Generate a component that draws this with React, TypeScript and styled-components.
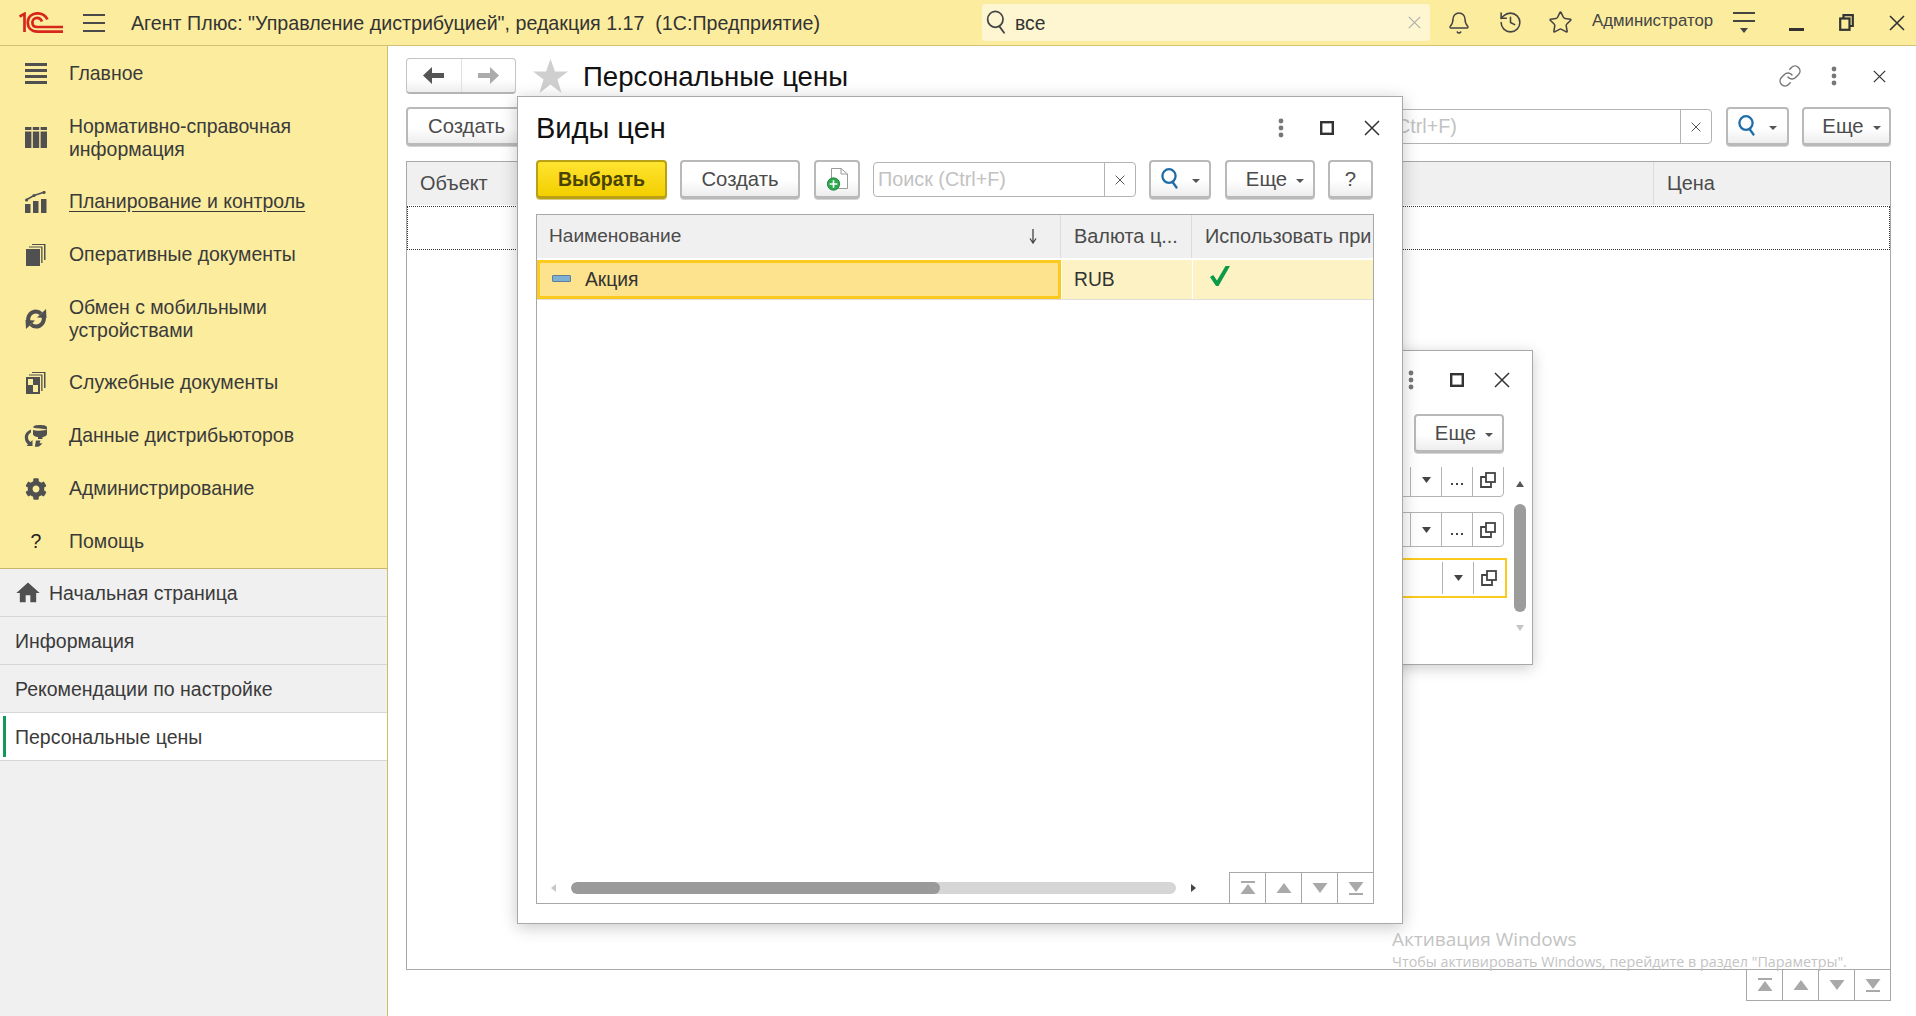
import React from 'react';
import styled, { createGlobalStyle } from 'styled-components';
import { FaCog } from 'react-icons/fa';
import { MdHome } from 'react-icons/md';
import { Bell, History, Star, Link } from 'lucide-react';

const GlobalStyle = createGlobalStyle`
  html, body { margin: 0; padding: 0; height: 100%; overflow: hidden; }
  body { font-family: "Liberation Sans", Arial, sans-serif; font-size: 19.3px; color: #333; background: #fff; }
  * { box-sizing: border-box; }
`;

const Root = styled.div`
  position: relative;
  width: 1916px;
  height: 1016px;
  display: flex;
  flex-direction: column;
  overflow: hidden;
`;

/* top bar */
const TopBar = styled.header`
  height: 46px;
  flex: none;
  display: flex;
  align-items: center;
  background: #fbec9e;
  border-bottom: 1px solid #d4c274;
`;
const Logo = styled.svg`
  width: 44px;
  height: 21px;
  margin-left: 19px;
  flex: none;
`;
const Burger = styled.div`
  width: 22px;
  height: 18px;
  margin-left: 20px;
  flex: none;
  border-top: 2px solid #4a4a4a;
  border-bottom: 2px solid #4a4a4a;
  position: relative;
  &::after {
    content: '';
    position: absolute;
    left: 0;
    right: 0;
    top: 6px;
    height: 2px;
    background: #4a4a4a;
  }
`;
const AppTitle = styled.div`
  margin: 2px 0 0 26px;
  width: 851px;
  flex: none;
  font-size: 19.65px;
  color: #333;
  white-space: pre;
`;
const GlobalSearch = styled.div`
  width: 448px;
  height: 37px;
  flex: none;
  display: flex;
  align-items: center;
  background: #fdf6d0;
  border-radius: 3px;
  padding: 0 9px 0 4px;
  color: #333;
`;
const GlobalSearchText = styled.span`
  flex: 1;
  margin: 2px 0 0 8px;
`;
const TopIcons = styled.div`
  display: flex;
  align-items: center;
  color: #444;
`;
const TopIcon = styled.div<{ $w: number }>`
  width: ${(p) => p.$w}px;
  display: flex;
  justify-content: center;
  align-items: center;
  flex: none;
`;
const UserName = styled.div`
  font-size: 16.8px;
  color: #444;
  margin: -3px 0 0 4px;
  width: 130px;
  flex: none;
`;

/* layout */
const Body = styled.div`
  flex: 1;
  display: flex;
  min-height: 0;
`;
const Sidebar = styled.aside`
  width: 388px;
  flex: none;
  display: flex;
  flex-direction: column;
  background: #f0f0f0;
  border-right: 1px solid #cdbd6e;
`;
const Menu = styled.nav`
  padding-top: 1px;
  background: #fbec9e;
  border-bottom: 1px solid #c8b86a;
`;
const MenuItem = styled.div<{ $active?: boolean; $h?: number }>`
  height: ${(p) => p.$h ?? 53}px;
  display: flex;
  align-items: center;
  font-size: 19.45px;
  line-height: 23px;
  color: #3a3a3a;
  span {
    text-decoration: ${(p) => (p.$active ? 'underline' : 'none')};
    text-underline-offset: 3px;
  }
`;
const MenuIcon = styled.div`
  width: 69px;
  flex: none;
  display: flex;
  justify-content: center;
  padding-left: 3px;
  color: #505050;
`;
const OpenTab = styled.div<{ $current?: boolean }>`
  position: relative;
  height: 48px;
  display: flex;
  align-items: center;
  padding: 1px 0 0 15px;
  border-bottom: 1px solid #d6d6d6;
  background: ${(p) => (p.$current ? '#fff' : 'transparent')};
  font-size: 19.5px;
  color: #3a3a3a;
  &::before {
    content: '';
    display: ${(p) => (p.$current ? 'block' : 'none')};
    position: absolute;
    left: 3px;
    top: 3px;
    bottom: 3px;
    width: 3px;
    background: #109a56;
  }
  svg { margin: 0 9px 0 0; color: #505050; }
`;
const Main = styled.main`
  flex: 1;
  min-width: 0;
  display: flex;
  flex-direction: column;
  padding: 12px 25px 15px 18px;
`;
const PageHead = styled.div`
  display: flex;
  align-items: center;
  height: 36px;
`;
const ArrowGroup = styled.div`
  display: flex;
  width: 110px;
  height: 36px;
  border: 1px solid #c4c4c4;
  border-bottom: 2px solid #b4b4b4;
  border-radius: 4px;
  background: linear-gradient(#fff 60%, #eee);
`;
const ArrowCell = styled.div`
  flex: 1;
  display: flex;
  align-items: center;
  justify-content: center;
  & + & { border-left: 1px solid #e0e0e0; }
`;
const PageStar = styled.svg`
  margin-left: 17px;
  flex: none;
`;
const PageTitle = styled.h1`
  flex: 1;
  margin: 2px 0 0 15px;
  font-size: 27.6px;
  font-weight: 400;
  color: #111;
`;
const WinButtons = styled.div<{ $shift: number }>`
  display: flex;
  margin-right: ${(p) => p.$shift}px;
`;
const WinBtn = styled.div`
  width: 45.5px;
  height: 28px;
  display: flex;
  align-items: center;
  justify-content: center;
  color: #444;
`;
const LinkBtn = styled(WinBtn)`
  padding-left: 4px;
`;
const Toolbar = styled.div<{ $mt?: number }>`
  display: flex;
  align-items: center;
  height: 39px;
  flex: none;
  margin-top: ${(p) => p.$mt ?? 0}px;
`;
const Btn = styled.button<{ $primary?: boolean; $ml?: number; $w?: number; $pl?: number }>`
  height: 39px;
  flex: none;
  display: inline-flex;
  align-items: center;
  justify-content: center;
  margin-left: ${(p) => p.$ml ?? 0}px;
  width: ${(p) => (p.$w ? `${p.$w}px` : 'auto')};
  padding: ${(p) => (p.$w ? `0 0 0 ${p.$pl ?? 0}px` : '0 20px')};
  font-family: inherit;
  font-size: ${(p) => (p.$primary ? '19.5px' : '20.3px')};
  font-weight: ${(p) => (p.$primary ? 700 : 400)};
  color: ${(p) => (p.$primary ? '#4a4200' : '#4b4b4b')};
  background: ${(p) =>
    p.$primary ? 'linear-gradient(#ffe430, #f3cf00)' : 'linear-gradient(#fff 55%, #ededed)'};
  border: 2px solid ${(p) => (p.$primary ? '#b9a015' : '#b9b9b9')};
  border-bottom-width: 3px;
  border-radius: 4px;
  box-shadow: 0 1px 0 ${(p) => (p.$primary ? '#d8c98a' : '#d4d4d4')};
`;
const Caret = styled.i<{ $gap?: number }>`
  display: inline-block;
  width: 0;
  height: 0;
  margin-left: ${(p) => p.$gap ?? 9}px;
  margin-top: 3px;
  border-left: 4px solid transparent;
  border-right: 4px solid transparent;
  border-top: 4px solid #555;
`;
const Search = styled.div<{ $w: number; $ml?: string }>`
  width: ${(p) => p.$w}px;
  height: 35px;
  flex: none;
  margin-left: ${(p) => p.$ml ?? '0'};
  display: flex;
  align-items: center;
  border: 1px solid #b4b4b4;
  border-radius: 4px;
  background: #fff;
`;
const SearchText = styled.div`
  flex: 1;
  padding-left: 4px;
  font-size: 19.8px;
  color: #c2c2c2;
  white-space: nowrap;
`;
const SearchClear = styled.div`
  width: 31px;
  height: 100%;
  flex: none;
  border-left: 1px solid #b4b4b4;
  display: flex;
  align-items: center;
  justify-content: center;
  color: #555;
`;
const Table = styled.div<{ $mt: number }>`
  flex: 1;
  min-height: 0;
  margin-top: ${(p) => p.$mt}px;
  display: flex;
  flex-direction: column;
  border: 1px solid #a8a8a8;
  background: #fff;
`;
const HeadRow = styled.div<{ $cols: string }>`
  display: grid;
  grid-template-columns: ${(p) => p.$cols};
  height: 43px;
  flex: none;
  background: #f0f0f0;
  color: #4b4b4b;
`;
const HeadCell = styled.div<{ $tight?: boolean }>`
  display: flex;
  align-items: center;
  justify-content: space-between;
  padding: 0 ${(p) => (p.$tight ? 22 : 2)}px 1px ${(p) => (p.$tight ? 12 : 13)}px;
  font-size: ${(p) => (p.$tight ? 19.1 : 19.9)}px;
  overflow: hidden;
  white-space: nowrap;
  border-right: 1px solid #dcdcdc;
  &:last-child { border-right: 0; }
`;
const EmptyRow = styled.div`
  height: 44px;
  flex: none;
  margin-top: 1px;
  border: 1px dotted #333;
`;
const BottomNav = styled.div`
  display: flex;
  justify-content: flex-end;
  height: 31px;
  flex: none;
`;
const NavGroup = styled.div<{ $boxed?: boolean }>`
  display: flex;
  height: 31px;
  margin-left: auto;
  border-top: ${(p) => (p.$boxed ? '0' : '1px solid #a8a8a8')};
  border-right: ${(p) => (p.$boxed ? '1px solid #a8a8a8' : '0')};
  border-bottom: ${(p) => (p.$boxed ? '1px solid #a8a8a8' : '0')};
`;
const NavBtn = styled.div`
  width: 36px;
  display: flex;
  align-items: center;
  justify-content: center;
  border-left: 1px solid #a8a8a8;
`;

/* windows */
const Dialog = styled.section`
  position: absolute;
  left: 517px;
  top: 96px;
  width: 886px;
  height: 828px;
  display: flex;
  flex-direction: column;
  padding: 0 28px 19px 18px;
  background: #fff;
  border: 1px solid #a8a8a8;
  box-shadow: 0 3px 16px rgba(0, 0, 0, 0.22);
  z-index: 3;
`;
const BackWindow = styled.section`
  position: absolute;
  left: 1100px;
  top: 350px;
  width: 433px;
  height: 315px;
  display: flex;
  flex-direction: column;
  padding-right: 28px;
  background: #fff;
  border: 1px solid #a8a8a8;
  box-shadow: 0 3px 14px rgba(0, 0, 0, 0.2);
  z-index: 2;
`;
const DialogHead = styled.div`
  height: 63px;
  flex: none;
  display: flex;
  align-items: center;
  justify-content: space-between;
  padding-bottom: 2px;
  margin-right: -21px;
`;
const DialogTitle = styled.h2`
  margin: 2px 0 0;
  font-size: 29px;
  font-weight: 400;
  color: #111;
`;
const BackHead = styled.div`
  height: 63px;
  flex: none;
  display: flex;
  align-items: center;
  justify-content: flex-end;
  padding-bottom: 6px;
  margin-right: -21px;
`;
const BackTools = styled.div`
  height: 39px;
  flex: none;
  display: flex;
  justify-content: flex-end;
`;
const FormArea = styled.div`
  position: relative;
  margin: 14px -4px 0 0;
  padding-right: 4px;
  height: 172px;
  overflow: hidden;
`;
const FieldRow = styled.div<{ $focus?: boolean }>`
  display: flex;
  justify-content: flex-end;
  height: ${(p) => (p.$focus ? '40px' : '35px')};
  margin: ${(p) => (p.$focus ? '11px -3px 0 0' : '15px 0 0')};
  padding: ${(p) => (p.$focus ? '2px 1px' : '0')};
  border: ${(p) => (p.$focus ? '2px solid #fbca1c' : '1px solid #b4b4b4')};
  border-radius: ${(p) => (p.$focus ? '0' : '4px')};
  &:first-child { margin-top: -5px; }
`;
const FieldCell = styled.div`
  width: 31px;
  flex: none;
  display: flex;
  align-items: center;
  justify-content: center;
  border-left: 1px solid #b4b4b4;
  color: #444;
`;
const FieldDots = styled.div`
  padding-top: 9px;
  display: flex;
  gap: 2.5px;
  i {
    width: 2.5px;
    height: 2.5px;
    background: #444;
  }
`;
const ScrollV = styled.div`
  position: absolute;
  right: 6px;
  top: 128px;
  width: 12px;
  height: 160px;
`;
const ScrollThumb = styled.div`
  position: absolute;
  left: 0;
  right: 0;
  top: 25px;
  height: 108px;
  border-radius: 6px;
  background: #9c9c9c;
`;
const Tri = styled.i<{ $up?: boolean; $c: string; $top: number }>`
  position: absolute;
  left: 2px;
  top: ${(p) => p.$top}px;
  width: 0;
  height: 0;
  border-left: 4px solid transparent;
  border-right: 4px solid transparent;
  ${(p) => (p.$up ? `border-bottom: 6px solid ${p.$c};` : `border-top: 6px solid ${p.$c};`)}
`;
const TableBody = styled.div`
  flex: 1;
  min-height: 0;
`;
const SelRow = styled.div`
  display: grid;
  grid-template-columns: 524px 131px 1fr;
  height: 39px;
  margin-top: 2px;
  background: #fdf2c4;
  box-shadow: 0 1px 0 #dedede;
`;
const SelMain = styled.div`
  display: flex;
  align-items: center;
  padding-left: 12px;
  background: #fde38d;
  border: 3px solid #fbca1c;
  color: #333;
`;
const Dash = styled.i`
  width: 19px;
  height: 7px;
  flex: none;
  margin-right: 14px;
  margin-top: -2px;
  background: #7fb0d4;
  border: 1px solid #5d7f99;
  border-radius: 1px;
`;
const Cell = styled.div`
  display: flex;
  align-items: center;
  padding-left: 12px;
  border-left: 1px solid #fff;
  color: #333;
`;
const TableFoot = styled.div`
  height: 31px;
  flex: none;
  display: flex;
  align-items: center;
`;
const HTrack = styled.div`
  width: 605px;
  height: 12px;
  margin: 0 15px;
  border-radius: 6px;
  background: #d6d6d6;
  overflow: hidden;
`;
const HThumb = styled.div`
  height: 100%;
  width: 61%;
  border-radius: 6px;
  background: #9a9a9a;
`;
const SideTri = styled.i<{ $dir: 'l' | 'r' }>`
  width: 0;
  height: 0;
  flex: none;
  border-top: 4px solid transparent;
  border-bottom: 4px solid transparent;
  ${(p) =>
    p.$dir === 'l'
      ? 'margin-left: 14px; border-right: 5px solid #c8c8c8;'
      : 'border-left: 5px solid #444;'}
`;
const Watermark = styled.div`
  position: absolute;
  left: 1392px;
  top: 925px;
  z-index: 4;
  font-family: "Open Sans", "Noto Sans", sans-serif;
  color: #c3c3c3;
  pointer-events: none;
  white-space: nowrap;
`;
const WatermarkTitle = styled.div`
  font-size: 19px;
  line-height: 28px;
`;
const WatermarkText = styled.div`
  font-size: 14.3px;
  line-height: 20px;
  margin-top: -1px;
`;

/* drawings */
const Dots = () => (
  <svg width="6" height="20" viewBox="0 0 6 20" fill="#777">
    <circle cx="3" cy="3" r="2.4" />
    <circle cx="3" cy="10" r="2.4" />
    <circle cx="3" cy="17" r="2.4" />
  </svg>
);
const Square = () => (
  <svg width="14" height="14" viewBox="0 0 14 14" fill="none" stroke="#333" strokeWidth="2.4">
    <rect x="1.2" y="1.2" width="11.6" height="11.6" />
  </svg>
);
const Cross = ({ size = 16, w = 1.5, c = '#333' }: { size?: number; w?: number; c?: string }) => (
  <svg width={size} height={size} viewBox="0 0 16 16" stroke={c} strokeWidth={w} fill="none">
    <path d="M1 1L15 15M15 1L1 15" />
  </svg>
);
const Loupe = ({ c = '#1f6da8', w = 2.3, size = 18 }: { c?: string; w?: number; size?: number }) => (
  <svg width={size} height={size * 1.17} viewBox="0 0 18 21" fill="none" stroke={c} strokeWidth={w}>
    <ellipse cx="8" cy="8" rx="6.6" ry="6.8" />
    <path d="M11.5 14L15.5 19.5" strokeLinecap="round" />
  </svg>
);
const Nav = ({ kind, c = '#a9a9a9' }: { kind: 'first' | 'up' | 'down' | 'last'; c?: string }) => (
  <svg width="18" height="16" viewBox="0 0 18 16" fill={c}>
    {kind === 'first' && <path d="M2 1H16V3H2ZM9 4L16.5 14H1.5Z" />}
    {kind === 'up' && <path d="M9 3L16.5 13H1.5Z" />}
    {kind === 'down' && <path d="M1.5 3H16.5L9 13Z" />}
    {kind === 'last' && <path d="M1.5 2H16.5L9 12ZM2 13H16V15H2Z" />}
  </svg>
);
const NavButtons = ({ boxed }: { boxed?: boolean }) => (
  <NavGroup $boxed={boxed}>
    <NavBtn><Nav kind="first" /></NavBtn>
    <NavBtn><Nav kind="up" /></NavBtn>
    <NavBtn><Nav kind="down" /></NavBtn>
    <NavBtn><Nav kind="last" /></NavBtn>
  </NavGroup>
);
const FieldOpen = () => (
  <svg width="16" height="16" viewBox="0 0 16 16" fill="none" stroke="#444" strokeWidth="1.8">
    <rect x="6" y="1" width="9" height="9" />
    <path d="M6 5H1V15H11V10" />
  </svg>
);
const FieldCaret = () => (
  <svg width="9" height="6" viewBox="0 0 9 6" fill="#444">
    <path d="M0 0H9L4.5 6Z" />
  </svg>
);
const BackArrow = ({ flip, c }: { flip?: boolean; c: string }) => (
  <svg width="21" height="17" viewBox="0 0 21 17" fill={c} style={flip ? { transform: 'scaleX(-1)' } : undefined}>
    <path d="M9 0L0 8.5L9 17V11H21V6H9Z" />
  </svg>
);
const DocAdd = () => (
  <svg width="21" height="23" viewBox="0 0 21 23">
    <path d="M4.5 .5H14L20.5 6V20.5H4.5Z" fill="#fff" stroke="#9a9a9a" />
    <path d="M14 .5V6H20.5" fill="none" stroke="#9a9a9a" />
    <circle cx="6.5" cy="16" r="6.2" fill="#2fa84f" stroke="#157a35" strokeWidth=".8" />
    <path d="M6.5 12.2V19.8M2.7 16H10.3" stroke="#fff" strokeWidth="1.6" />
  </svg>
);

const IconMain = () => (
  <svg width="22" height="21" viewBox="0 0 22 21" fill="currentColor">
    <rect y="0" width="22" height="3" />
    <rect y="6" width="22" height="3" />
    <rect y="12" width="22" height="3" />
    <rect y="18" width="22" height="3" />
  </svg>
);
const IconBook = () => (
  <svg width="22" height="21" viewBox="0 0 22 21" fill="currentColor">
    <rect x="0" y="0" width="6.4" height="3" />
    <rect x="7.8" y="0" width="6.4" height="3" />
    <rect x="15.6" y="0" width="6.4" height="3" />
    <rect x="0" y="4.5" width="6.4" height="16.5" />
    <rect x="7.8" y="4.5" width="6.4" height="16.5" />
    <rect x="15.6" y="4.5" width="6.4" height="16.5" />
  </svg>
);
const IconPlan = () => (
  <svg width="22" height="22" viewBox="0 0 22 22" fill="currentColor">
    <rect x="0" y="13" width="5.5" height="9" />
    <rect x="8" y="10" width="5.5" height="12" />
    <rect x="16" y="8" width="5.5" height="14" />
    <path d="M1 9L9 4.5L18 1.5" fill="none" stroke="currentColor" strokeWidth="1.6" />
    <circle cx="1.6" cy="9" r="1.6" />
    <circle cx="9" cy="4.5" r="1.6" />
    <circle cx="19" cy="1.5" r="1.6" />
  </svg>
);
const IconDocs = () => (
  <svg width="20" height="22" viewBox="0 0 20 22" fill="currentColor">
    <rect x="0" y="5" width="14" height="17" />
    <path d="M3 3.5V2.5H16.5V19H15.2V3.5Z" />
    <path d="M6 1V0H19.5V16H18V1Z" />
  </svg>
);
const IconSync = () => (
  <svg width="22" height="22" viewBox="0 0 22 22" fill="none" stroke="currentColor" strokeWidth="4">
    <path d="M3.2 13.5C2.4 7.8 6.2 3.4 11 3.4C13 3.4 14.6 4.2 16 5.6" />
    <path d="M18.8 8.5C19.6 14.2 15.8 18.6 11 18.6C9 18.6 7.4 17.8 6 16.4" />
    <path d="M12 9.5L21.5 10L21 1Z" fill="currentColor" stroke="none" />
    <path d="M10 12.5L.5 12L1 21Z" fill="currentColor" stroke="none" />
  </svg>
);
const IconService = () => (
  <svg width="20" height="22" viewBox="0 0 20 22" fill="currentColor">
    <path fillRule="evenodd" d="M0 5H14V22H0ZM2 7V13H7V7ZM7 13V20H12V13Z" />
    <path d="M3 3.5V2.5H16.5V19H15.2V3.5Z" />
    <path d="M6 1V0H19.5V16H18V1Z" />
  </svg>
);
const IconData = () => (
  <svg width="24" height="22" viewBox="0 0 24 22" fill="currentColor">
    <path d="M9 2.5C9 .8 12 0 16 0S23 .8 23 2.5V9C23 11 20 12 18.5 12V14H14V12C12 12 9 11 9 9V5C11 6 21 6 23 4.6C20 3.6 12 3.6 9 2.5Z" />
    <path d="M7 4.5C3 6 .8 9 .8 12.5 .8 15.5 2 17.8 4 19.5L2.5 21H8.5V15L6.5 17C5 15.8 4 14.2 4 12.5 4 10 5.5 8.2 7 7.5Z" />
    <path d="M12 15.5L10.8 21.8H14C15.8 21 17.4 19.8 18.4 18.2H15.5L16.5 15.5Z" />
  </svg>
);

const menu: { icon: React.ReactNode; text: React.ReactNode; active?: boolean; h?: number }[] = [
  { icon: <IconMain />, text: 'Главное' },
  { icon: <IconBook />, text: <>Нормативно-справочная<br />информация</>, h: 75 },
  { icon: <IconPlan />, text: 'Планирование и контроль', active: true },
  { icon: <IconDocs />, text: 'Оперативные документы' },
  { icon: <IconSync />, text: <>Обмен с мобильными<br />устройствами</>, h: 75 },
  { icon: <IconService />, text: 'Служебные документы' },
  { icon: <IconData />, text: 'Данные дистрибьюторов' },
  { icon: <FaCog size={22} />, text: 'Администрирование' },
  { icon: <span style={{ color: '#222' }}>?</span>, text: 'Помощь' },
];

export default function App() {
  return (
    <Root>
      <GlobalStyle />
      <TopBar>
        <Logo viewBox="0 0 44 21" fill="none" stroke="#d8261c" strokeWidth="2.7">
          <path d="M.5 4.5L5.5 1.8V20" />
          <path d="M28.5 7.5C26.5 3.5 22.5 1.3 18.5 1.3C12.5 1.3 8.8 5.2 8.8 10.4C8.8 16 12.6 19.6 18.5 19.6H44" />
          <path d="M23 9.5C22 7 20.5 5.8 18.3 5.8C15.3 5.8 13.4 7.8 13.4 10.4C13.4 13.2 15.2 15 18.3 15H44" />
        </Logo>
        <Burger />
        <AppTitle>Агент Плюс: "Управление дистрибуцией", редакция 1.17  (1С:Предприятие)</AppTitle>
        <GlobalSearch>
          <Loupe c="#444" w={1.5} size={21} />
          <GlobalSearchText>все</GlobalSearchText>
          <Cross size={13} w={1.3} c="#aaa" />
        </GlobalSearch>
        <TopIcons>
          <TopIcon $w={58}><Bell size={24} strokeWidth={1.5} /></TopIcon>
          <TopIcon $w={44}><History size={25} strokeWidth={1.5} /></TopIcon>
          <TopIcon $w={56}><Star size={25} strokeWidth={1.5} /></TopIcon>
          <UserName>Администратор</UserName>
          <TopIcon $w={44}>
            <svg width="22" height="24" viewBox="0 0 22 24" fill="#444">
              <rect y="1" width="22" height="2" />
              <rect x="0" y="9" width="22" height="2" />
              <path d="M7 17H15L11 22Z" />
            </svg>
          </TopIcon>
          <TopIcon $w={61}>
            <svg width="15" height="18" viewBox="0 0 15 18" fill="#333"><rect y="14" width="15" height="3" /></svg>
          </TopIcon>
          <TopIcon $w={39}>
            <svg width="15" height="17" viewBox="0 0 15 17" fill="none" stroke="#333" strokeWidth="2.2">
              <path d="M4.5 4V1.2H13.8V12H10.5" />
              <rect x="1.2" y="4.5" width="9.3" height="11.3" />
            </svg>
          </TopIcon>
          <TopIcon $w={62}><Cross size={16} w={1.6} /></TopIcon>
        </TopIcons>
      </TopBar>
      <Body>
        <Sidebar>
          <Menu>
            {menu.map((m, i) => (
              <MenuItem key={i} $active={m.active} $h={m.h}>
                <MenuIcon>{m.icon}</MenuIcon>
                <span>{m.text}</span>
              </MenuItem>
            ))}
          </Menu>
          <OpenTab><MdHome size={28} style={{ marginLeft: -1, marginRight: 7 }} />Начальная страница</OpenTab>
          <OpenTab>Информация</OpenTab>
          <OpenTab>Рекомендации по настройке</OpenTab>
          <OpenTab $current>Персональные цены</OpenTab>
        </Sidebar>
        <Main>
          <PageHead>
            <ArrowGroup>
              <ArrowCell><BackArrow c="#555" /></ArrowCell>
              <ArrowCell><BackArrow flip c="#ababab" /></ArrowCell>
            </ArrowGroup>
            <PageStar width="35" height="34" viewBox="0 0 35 34" fill="#cfcfcf">
              <path d="M17.5 0L22 12.5H35L24.5 20.5L28.5 34L17.5 25.5L6.5 34L10.5 20.5L0 12.5H13Z" />
            </PageStar>
            <PageTitle>Персональные цены</PageTitle>
            <WinButtons $shift={-11}>
              <LinkBtn><Link size={24} strokeWidth={1.5} color="#777" /></LinkBtn>
              <WinBtn><Dots /></WinBtn>
              <WinBtn><Cross size={13} w={1.5} /></WinBtn>
            </WinButtons>
          </PageHead>
          <Toolbar $mt={13}>
            <Btn>Создать</Btn>
            <Search $w={388} $ml="auto">
              <SearchText>Поиск (Ctrl+F)</SearchText>
              <SearchClear><Cross size={10} w={1.6} c="#555" /></SearchClear>
            </Search>
            <Btn $w={63} $ml={14}><Loupe /><Caret $gap={13} /></Btn>
            <Btn $w={89} $ml={13} $pl={10}>Еще<Caret /></Btn>
          </Toolbar>
          <Table $mt={15}>
            <HeadRow $cols="1247px 1fr">
              <HeadCell>Объект</HeadCell>
              <HeadCell>Цена</HeadCell>
            </HeadRow>
            <EmptyRow />
          </Table>
          <BottomNav><NavButtons boxed /></BottomNav>
        </Main>
      </Body>

      <BackWindow>
        <BackHead>
          <WinBtn><Dots /></WinBtn>
          <WinBtn><Square /></WinBtn>
          <WinBtn><Cross size={16} w={1.5} /></WinBtn>
        </BackHead>
        <BackTools>
          <Btn $w={90} $pl={10}>Еще<Caret /></Btn>
        </BackTools>
        <FormArea>
          <FieldRow>
            <FieldCell><FieldCaret /></FieldCell>
            <FieldCell><FieldDots><i /><i /><i /></FieldDots></FieldCell>
            <FieldCell><FieldOpen /></FieldCell>
          </FieldRow>
          <FieldRow>
            <FieldCell><FieldCaret /></FieldCell>
            <FieldCell><FieldDots><i /><i /><i /></FieldDots></FieldCell>
            <FieldCell><FieldOpen /></FieldCell>
          </FieldRow>
          <FieldRow $focus>
            <FieldCell><FieldCaret /></FieldCell>
            <FieldCell><FieldOpen /></FieldCell>
          </FieldRow>
        </FormArea>
        <ScrollV>
          <Tri $up $c="#555" $top={2} />
          <ScrollThumb />
          <Tri $c="#c4c4c4" $top={146} />
        </ScrollV>
      </BackWindow>

      <Dialog>
        <DialogHead>
          <DialogTitle>Виды цен</DialogTitle>
          <WinButtons $shift={0}>
            <WinBtn><Dots /></WinBtn>
            <WinBtn><Square /></WinBtn>
            <WinBtn><Cross size={16} w={1.5} /></WinBtn>
          </WinButtons>
        </DialogHead>
        <Toolbar>
          <Btn $primary $w={131}>Выбрать</Btn>
          <Btn $w={120} $ml={13}>Создать</Btn>
          <Btn $w={46} $ml={14}><DocAdd /></Btn>
          <Search $w={263} $ml="13px">
            <SearchText>Поиск (Ctrl+F)</SearchText>
            <SearchClear><Cross size={10} w={1.6} c="#555" /></SearchClear>
          </Search>
          <Btn $w={62} $ml={13}><Loupe /><Caret $gap={13} /></Btn>
          <Btn $w={90} $ml={14} $pl={10}>Еще<Caret /></Btn>
          <Btn $w={45} $ml={13}>?</Btn>
        </Toolbar>
        <Table $mt={15}>
          <HeadRow $cols="524px 131px 1fr">
            <HeadCell $tight>
              Наименование
              <svg width="10" height="16" viewBox="0 0 10 16" fill="none" stroke="#444" strokeWidth="1.3">
                <path d="M5 1V14M2 10.5L5 15L8 10.5" />
              </svg>
            </HeadCell>
            <HeadCell>Валюта ц...</HeadCell>
            <HeadCell>Использовать при</HeadCell>
          </HeadRow>
          <TableBody>
            <SelRow>
              <SelMain><Dash />Акция</SelMain>
              <Cell>RUB</Cell>
              <Cell>
                <svg width="20" height="20" viewBox="0 0 20 20" fill="#0a9a48" style={{ margin: '-8px 0 0 5px' }}>
                  <path d="M0 11L3.2 9L7 14.5L15.5 0H20L8.5 20H6Z" />
                </svg>
              </Cell>
            </SelRow>
          </TableBody>
          <TableFoot>
            <SideTri $dir="l" />
            <HTrack><HThumb /></HTrack>
            <SideTri $dir="r" />
            <NavButtons />
          </TableFoot>
        </Table>
      </Dialog>

      <Watermark>
        <WatermarkTitle>Активация Windows</WatermarkTitle>
        <WatermarkText>Чтобы активировать Windows, перейдите в раздел "Параметры".</WatermarkText>
      </Watermark>
    </Root>
  );
}
